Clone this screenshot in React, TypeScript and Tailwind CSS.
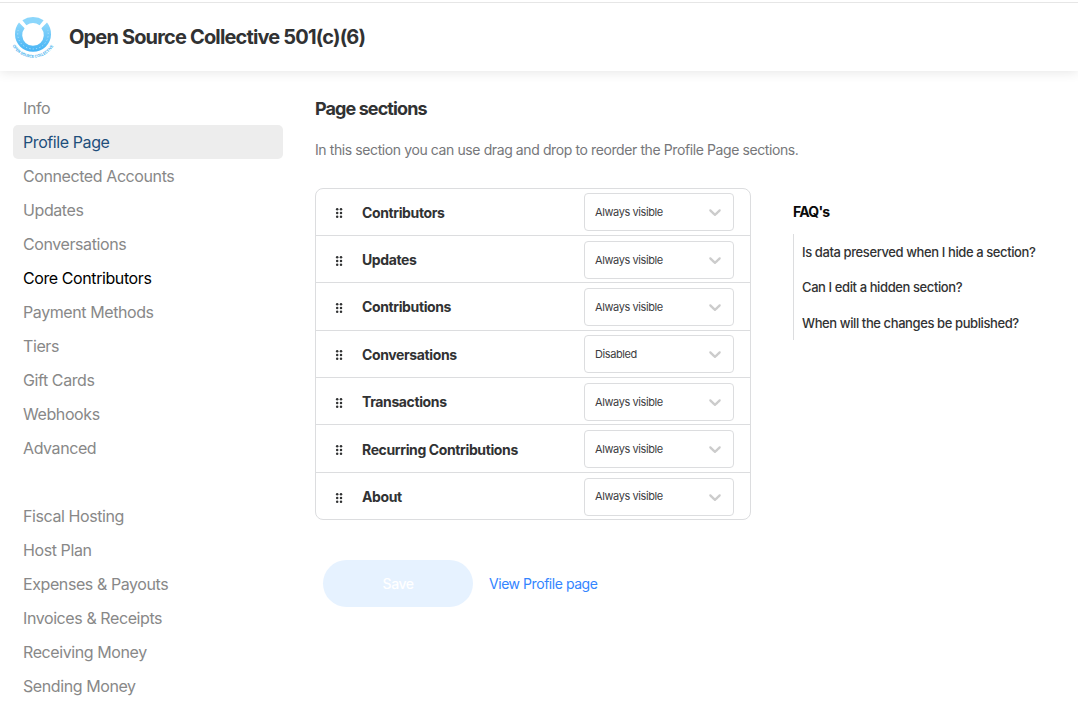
import React from 'react';

const menu = [
  'Info',
  'Profile Page',
  'Connected Accounts',
  'Updates',
  'Conversations',
  'Core Contributors',
  'Payment Methods',
  'Tiers',
  'Gift Cards',
  'Webhooks',
  'Advanced',
];

const hostMenu = [
  'Fiscal Hosting',
  'Host Plan',
  'Expenses & Payouts',
  'Invoices & Receipts',
  'Receiving Money',
  'Sending Money',
];

const sections = [
  { name: 'Contributors', visibility: 'Always visible' },
  { name: 'Updates', visibility: 'Always visible' },
  { name: 'Contributions', visibility: 'Always visible' },
  { name: 'Conversations', visibility: 'Disabled' },
  { name: 'Transactions', visibility: 'Always visible' },
  { name: 'Recurring Contributions', visibility: 'Always visible' },
  { name: 'About', visibility: 'Always visible' },
];

function Logo() {
  return (
    <svg width="44" height="44" viewBox="11 15 44 44" className="shrink-0">
      <defs>
        <linearGradient id="ring" x1="0" y1="0" x2="0" y2="1">
          <stop offset="0" stopColor="#8fd8fb" />
          <stop offset="1" stopColor="#46b4f5" />
        </linearGradient>
        <path id="caption" d="M12.6 45.8 A23.6 23.6 0 0 0 53.9 45.2" />
      </defs>
      <path
        d="M19 22.6 L24.6 28.2 A10.8 10.8 0 1 0 41.4 28.2 L47 22.6 A18.1 18.1 0 0 1 51 34.5 A18 17.2 0 0 1 15 34.5 A18.1 18.1 0 0 1 19 22.6Z"
        fill="url(#ring)"
      />
      <path d="M22.4 20.2 A19 19 0 0 1 43.6 20.2 L39.6 25.2 A12 12 0 0 0 26.4 25.2Z" fill="#8bd6fb" />
      <path
        d="M18.2 30 A15.2 15.2 0 0 0 33 49 A15.2 15.2 0 0 0 47.8 30"
        fill="none"
        stroke="#b5e4fd"
        strokeWidth="1"
        strokeDasharray="1.2 2.2"
      />
      <text fill="#45b2ee" fontSize="3.9" fontWeight="700" fontFamily="Inter, sans-serif">
        <textPath href="#caption" textLength="49" lengthAdjust="spacingAndGlyphs">
          OPEN SOURCE COLLECTIVE
        </textPath>
      </text>
    </svg>
  );
}

function MenuItem({ label }: { label: string }) {
  const state =
    label === 'Profile Page'
      ? 'bg-[#ededed] text-[#1f4f7b]'
      : label === 'Core Contributors'
        ? 'text-black'
        : 'text-[#888888]';
  return (
    <li className={`flex h-[34px] items-center rounded-[5px] px-2.5 text-base tracking-[-0.41px] ${state}`}>
      <a>{label}</a>
    </li>
  );
}

function DragHandle() {
  return (
    <svg width="8" height="12" viewBox="0 0 8 12" fill="#313233" className="mt-[2.2px] shrink-0">
      {[2.2, 6, 9.8].map(y => (
        <React.Fragment key={y}>
          <circle cx="2.2" cy={y} r="1.25" />
          <circle cx="6" cy={y} r="1.25" />
        </React.Fragment>
      ))}
    </svg>
  );
}

function VisibilitySelect({ value }: { value: string }) {
  return (
    <div className="flex h-[38px] w-[150px] items-center justify-between rounded-[4px] border border-[#dcdddf] pr-2 pl-2.5 text-[11px] tracking-[-0.4px] text-[#3c3d3f]">
      <span className="pt-[0.4px]">{value}</span>
      <svg width="20" height="20" viewBox="0 0 20 20" fill="#cccccc">
        <path d="M4.516 7.548c0.436-0.446 1.043-0.481 1.576 0l3.908 3.747 3.908-3.747c0.533-0.481 1.141-0.446 1.574 0 0.436 0.445 0.408 1.197 0 1.615-0.406 0.418-4.695 4.502-4.695 4.502-0.217 0.223-0.502 0.335-0.787 0.335s-0.57-0.112-0.789-0.335c0 0-4.287-4.084-4.695-4.502s-0.436-1.17 0-1.615z" />
      </svg>
    </div>
  );
}

export default function App() {
  return (
    <div className="h-[710px] w-[1078px] overflow-hidden bg-white font-['Inter',sans-serif] text-[#313233]">
      <header className="flex h-[71px] items-center border-t-2 border-white shadow-[0_0_12px_rgba(0,0,0,0.12)]">
        <div className="flex h-[69px] w-full items-center border-t border-[#e6e6e6] pl-[11px]">
          <Logo />
          <h1 className="ml-3.5 text-[20px] font-bold tracking-[-0.84px]">Open Source Collective 501(c)(6)</h1>
        </div>
      </header>
      <div className="flex pt-5 pl-[13px]">
        <nav className="w-[270px] shrink-0">
          <ul>
            {menu.map(label => (
              <MenuItem key={label} label={label} />
            ))}
          </ul>
          <ul className="mt-[34px]">
            {hostMenu.map(label => (
              <MenuItem key={label} label={label} />
            ))}
          </ul>
        </nav>
        <main className="ml-8 w-[483px] shrink-0">
          <h2 className="mt-[5px] text-[18px] leading-[26px] font-bold tracking-[-0.91px]">Page sections</h2>
          <p className="mt-[18px] text-sm leading-[20px] tracking-[-0.4px] whitespace-nowrap text-[#76777a]">
            In this section you can use drag and drop to reorder the Profile Page sections.
          </p>
          <div className="mt-7 flex">
            <ul className="h-[332px] w-[436px] shrink-0 rounded-[8px] border border-[#dcdddf]">
              {sections.map(section => (
                <li
                  key={section.name}
                  className="flex h-[47.4px] items-center border-b border-[#dcdddf] pt-[1.2px] pr-4 pl-[19px] first:-mt-[0.6px] last:border-b-transparent"
                >
                  <DragHandle />
                  <span className="ml-[19px] flex-1 pt-[0.8px] text-sm font-bold tracking-[-0.38px]">{section.name}</span>
                  <VisibilitySelect value={section.visibility} />
                </li>
              ))}
            </ul>
            <aside className="ml-[42px] shrink-0 pt-3.5">
              <h3 className="text-sm leading-[20px] font-bold tracking-[-0.75px] text-[#090a0a]">FAQ's</h3>
              <ul className="mt-3 h-[106px] border-l border-[#dcdddf] pl-2 text-[13px] font-medium tracking-[-0.4px] whitespace-nowrap">
                <li className="h-[35.4px] leading-[37px]">Is data preserved when I hide a section?</li>
                <li className="h-[35.4px] leading-[37px]">Can I edit a hidden section?</li>
                <li className="h-[35.2px] leading-[37px]">When will the changes be published?</li>
              </ul>
            </aside>
          </div>
          <div className="mt-10 ml-2 flex items-center">
            <button className="h-[47px] w-[150px] rounded-full bg-[#e6f2ff] text-sm font-medium tracking-[-0.5px] text-white">
              Save
            </button>
            <a className="ml-4 text-sm tracking-[-0.45px] text-[#3385ff]">View Profile page</a>
          </div>
        </main>
      </div>
    </div>
  );
}
